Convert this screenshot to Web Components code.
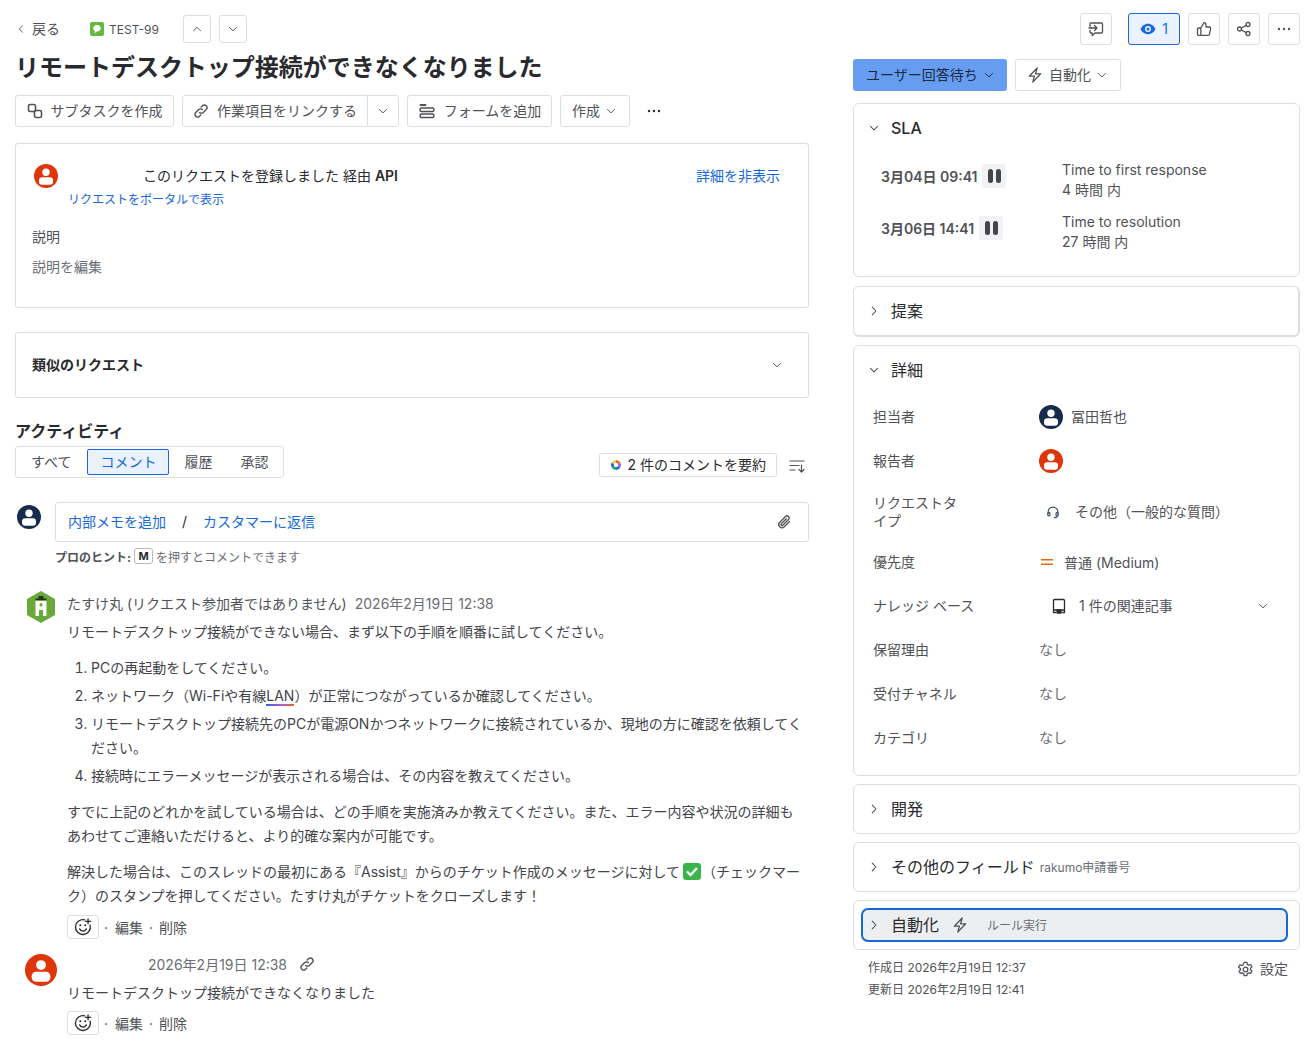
<!DOCTYPE html>
<html lang="ja">
<head>
<meta charset="utf-8">
<title>TEST-99</title>
<style>
    html, body { margin: 0; padding: 0; background: #fff; }
    body {
        font-family: Inter, "Noto Sans CJK JP", sans-serif;
        font-size: 14px;
        color: #292a2e;
    }
</style>
</head>
<body>
<issue-page></issue-page>

<script>
// stroke icons on a 16x16 box, filled ones carry their own attributes
const ICONS = {
    'chevron-down': '<path d="M4 6.2l4 4 4-4"/>',
    'chevron-up': '<path d="M4 10l4-4 4 4"/>',
    'chevron-left': '<path d="M10 3.5L5.8 8l4.2 4.5"/>',
    'chevron-right': '<path d="M6 3.5L10.2 8 6 12.5"/>',
    'subtask': '<rect x="1.5" y="1.5" width="7" height="7" rx="1.6"/><rect x="7.5" y="7.5" width="7" height="7" rx="1.6"/>',
    'link': '<path d="M6.6 9.4a2.6 2.6 0 0 0 3.7 0l2.9-2.9a2.6 2.6 0 0 0-3.7-3.7L8.2 4.1"/><path d="M9.4 6.6a2.6 2.6 0 0 0-3.7 0L2.8 9.5a2.6 2.6 0 0 0 3.7 3.7l1.3-1.3"/>',
    'form': '<path d="M1.5 2h5" stroke-width="1.800"/><rect x="1.200" y="5" width="13.600" height="3.600" rx="1"/><rect x="1.200" y="11" width="13.600" height="3.600" rx="1"/>',
    'more': '<circle cx="3" cy="8" r="1.2" fill="currentColor" stroke="none"/><circle cx="8" cy="8" r="1.2" fill="currentColor" stroke="none"/><circle cx="13" cy="8" r="1.2" fill="currentColor" stroke="none"/>',
    'feedback': '<path d="M3 2h10.5a1 1 0 0 1 1 1v8a1 1 0 0 1-1 1H7l-2.8 2.5V12H3a1 1 0 0 1-1-1V9.5"/><path d="M2 2v3.5M1 7h8M6.5 4.5L9 7l-2.500 2.500"/>',
    'eye': '<path fill="currentColor" stroke="none" fill-rule="evenodd" d="M8 2.800c3.400 0 6.200 2.300 7.500 5.200-1.300 2.900-4.100 5.200-7.500 5.200S1.800 10.900.5 8C1.800 5.100 4.600 2.800 8 2.800zm0 2.200a3 3 0 1 0 0 6 3 3 0 0 0 0-6zm0 1.500a1.500 1.500 0 1 1 0 3 1.500 1.500 0 0 1 0-3z"/>',
    'like': '<path d="M4.800 7v7.300H2.500a1 1 0 0 1-1-1V8a1 1 0 0 1 1-1h2.300zm0 0L8 1.700c1.300 0 2 .9 2 2V6h3.300c.9 0 1.500.8 1.300 1.700l-1.100 5.400c-.1.700-.7 1.200-1.400 1.200H4.800"/>',
    'share': '<circle cx="3.500" cy="8" r="2"/><circle cx="12" cy="3.500" r="2"/><circle cx="12" cy="12.500" r="2"/><path d="M5.300 7l4.900-2.600M5.300 9l4.900 2.600"/>',
    'bolt': '<path d="M10.200 .9L2.300 9.200h5.100L5.800 15.100l7.900-8.300H8.600z"/>',
    'clip': '<path d="M13.500 7.500L8 13a3.200 3.200 0 0 1-4.500-4.500l6-6a2.100 2.100 0 0 1 3 3l-5.700 5.700a1 1 0 0 1-1.500-1.500l5-5"/>',
    'sort': '<path d="M1 3h14M1 7.500h9M1 12h5M12.500 7v7M10 11.500l2.500 2.500 2.500-2.500"/>',
    'emoji': '<path d="M9.600 1.700A6.600 6.600 0 1 0 14.300 6.400"/><path d="M5 9.700c.7 1.300 1.800 2 3 2s2.300-.7 3-2"/><path d="M12.500 .8v4.400M10.300 3h4.400"/><circle cx="5.600" cy="6.400" r=".9" fill="currentColor" stroke="none"/><circle cx="10" cy="6.400" r=".9" fill="currentColor" stroke="none"/>',
    'headset': '<path d="M2.500 10V7.800a5.500 5.500 0 0 1 11 0V10"/><rect x="2" y="8.500" width="2.500" height="4" rx="1.100"/><rect x="11.500" y="8.500" width="2.500" height="4" rx="1.100"/><path d="M12.700 12.500c0 1.300-1.300 2-3.200 2"/>',
    'book': '<path d="M13.500 12V2.500a1 1 0 0 0-1-1h-9a1 1 0 0 0-1 1V12zM2.500 12v2.500h2M13.500 12v2.500h-2"/><rect x="6" y="12" width="4" height="3" fill="currentColor"/>',
    'gear': '<circle cx="8" cy="8" r="2.200"/><path d="M6.700 1.300h2.600l.4 1.900 1.200.7 1.900-.6 1.300 2.200-1.400 1.300v1.400l1.400 1.300-1.300 2.200-1.900-.6-1.200.7-.4 1.900H6.700l-.4-1.900-1.200-.7-1.900.6-1.300-2.200 1.400-1.300V7.200L1.400 5.900l1.300-2.200 1.900.6 1.200-.7z"/>',
};

class UiIcon extends HTMLElement {
    connectedCallback() {
        const size = this.getAttribute('size') || 16;
        const width = this.getAttribute('stroke') || 1.4;
        const name = this.getAttribute('name');
        this.attachShadow({ mode: 'open' }).innerHTML = `
            <style>
                :host { display: inline-flex; flex: none; width: ${size}px; height: ${size}px; }
                svg { display: block; width: 100%; height: 100%; fill: none; stroke: currentColor; stroke-width: ${width}; stroke-linecap: round; stroke-linejoin: round; }
            </style>
            <svg viewBox="0 0 16 16">${ICONS[name] || ''}</svg>
        `;
    }
}
customElements.define('ui-icon', UiIcon);

class UserAvatar extends HTMLElement {
    connectedCallback() {
        const size = this.getAttribute('size') || 24;
        const color = this.getAttribute('color') || '#de350b';
        this.attachShadow({ mode: 'open' }).innerHTML = `
            <style>
                :host { display: block; flex: none; width: ${size}px; height: ${size}px; }
                svg { display: block; width: 100%; height: 100%; }
            </style>
            <svg viewBox="0 0 24 24">
                <defs><clipPath id="c"><circle cx="12" cy="12" r="12"/></clipPath></defs>
                <circle cx="12" cy="12" r="12" fill="${color}"/>
                <circle cx="12" cy="8.300" r="3.700" fill="#fff"/>
                <rect x="5" y="13.300" width="14" height="7.500" rx="3.200" fill="#fff" clip-path="url(#c)"/>
            </svg>
        `;
    }
}
customElements.define('user-avatar', UserAvatar);

// text in the CJK font sits a pixel low, so the padding lifts it and icons are pushed back
class UiButton extends HTMLElement {
    constructor() {
        super();
        this.attachShadow({ mode: 'open' }).innerHTML = `
            <style>
                :host {
                    display: inline-flex;
                    align-items: center;
                    justify-content: center;
                    box-sizing: border-box;
                    height: 32px;
                    gap: 8px;
                    padding: 0 0 2px;
                    border: 1px solid #dcdee2;
                    border-radius: 3px;
                    background: #fff;
                    color: #505258;
                    font-size: 14px;
                    white-space: nowrap;
                }
                ::slotted(ui-icon) { margin-top: 2px; }
                :host([selected]) { background: #e9f2fe; border-color: #1868db; color: #1868db; }
                :host([square]) { width: 32px; padding: 0; }
                :host([square]) ::slotted(ui-icon) { margin-top: 0; }
                :host([small]) { width: 28px; height: 28px; padding: 0; }
                :host([small]) ::slotted(ui-icon) { margin-top: 0; }
            </style>
            <slot></slot>
        `;
    }
}
customElements.define('ui-button', UiButton);

class SidePanel extends HTMLElement {
    connectedCallback() {
        const open = this.hasAttribute('open');
        const latin = this.hasAttribute('latin');
        this.attachShadow({ mode: 'open' }).innerHTML = `
            <style>
                :host {
                    display: block;
                    box-sizing: border-box;
                    border: 1px solid #dcdee2;
                    border-radius: 6px;
                    background: #fff;
                }
                .head {
                    display: flex;
                    align-items: center;
                    gap: 10px;
                    box-sizing: border-box;
                    height: 48px;
                    padding: 0 0 ${latin ? 0 : 2}px 13px;
                    font-size: 16px;
                    font-weight: ${latin ? 500 : 400};
                    color: #292a2e;
                }
                ui-icon { margin-top: ${latin ? 0 : 2}px; color: #505258; }
            </style>
            <div class="head">
                <ui-icon name="${open ? 'chevron-down' : 'chevron-right'}" size="14" stroke="1.200"></ui-icon>
                <span>${this.getAttribute('heading')}</span>
                <slot name="extra"></slot>
            </div>
            <slot></slot>
        `;
    }
}
customElements.define('side-panel', SidePanel);

class DetailField extends HTMLElement {
    connectedCallback() {
        this.attachShadow({ mode: 'open' }).innerHTML = `
            <style>
                :host { display: grid; grid-template-columns: 166px 1fr; align-items: center; min-height: 24px; font-size: 14px; }
                :host([tall]) { min-height: 37px; }
                .label { width: 90px; line-height: 18px; color: #505258; }
                :host([nowrap]) .label { white-space: nowrap; }
                .value { display: flex; align-items: center; color: #505258; }
            </style>
            <div class="label">${this.getAttribute('label')}</div>
            <div class="value"><slot></slot></div>
        `;
    }
}
customElements.define('detail-field', DetailField);

class SlaRow extends HTMLElement {
    connectedCallback() {
        this.attachShadow({ mode: 'open' }).innerHTML = `
            <style>
                :host { display: grid; grid-template-columns: 181px 1fr; height: 40px; }
                .when { display: flex; align-items: center; gap: 5px; height: 24px; margin-top: 4px; font-weight: 600; color: #505258; white-space: nowrap; }
                .pause { display: flex; align-items: center; justify-content: center; gap: 3px; width: 24px; height: 24px; border-radius: 3px; background: #f1f2f4; }
                .pause i { display: block; width: 5px; height: 14px; border-radius: 2.500px; background: #44464c; }
                .what { line-height: 20px; color: #505258; }
            </style>
            <div class="when">${this.getAttribute('when')}<span class="pause"><i></i><i></i></span></div>
            <div class="what">${this.getAttribute('title')}<br>${this.getAttribute('left')}</div>
        `;
    }
}
customElements.define('sla-row', SlaRow);

class CommentActions extends HTMLElement {
    constructor() {
        super();
        this.attachShadow({ mode: 'open' }).innerHTML = `
            <style>
                :host { display: flex; align-items: center; height: 24px; color: #505258; font-size: 14px; white-space: nowrap; }
                .react { display: flex; align-items: center; justify-content: center; box-sizing: border-box; width: 32px; height: 24px; margin-right: 5px; border: 1px solid #dcdee2; border-radius: 3px; color: #292a2e; }
                .dot { width: 4px; text-align: center; }
                .a { margin-right: 6px; }
                .b { margin-right: 7px; }
            </style>
            <span class="react"><ui-icon name="emoji" size="18" stroke="1.200"></ui-icon></span>
            <span class="dot b">·</span><span class="a">編集</span><span class="dot a">·</span><span>削除</span>
        `;
    }
}
customElements.define('comment-actions', CommentActions);

class IssueMain extends HTMLElement {
    constructor() {
        super();
        this.attachShadow({ mode: 'open' }).innerHTML = `
            <style>
                :host { display: block; width: 794px; padding-top: 15px; }
                .crumbs { display: flex; align-items: center; height: 28px; color: #505258; font-size: 12px; }
                .back { display: flex; align-items: center; gap: 5px; font-size: 14px; width: 75px; padding-bottom: 2px; }
                .back ui-icon { margin-top: 2px; }
                .key { display: flex; align-items: center; gap: 5px; width: 93px; }
                .key svg { width: 14px; height: 14px; }
                .crumbs ui-button + ui-button { margin-left: 8px; }
                h1 { margin: 10px 0 0; font-size: 24px; line-height: 30px; font-weight: 700; color: #292a2e; white-space: nowrap; letter-spacing: -0.02px; }
                .tools { display: flex; align-items: center; gap: 8px; margin-top: 12px; }
                .split { display: flex; }
                .split ui-button:first-child { width: 186px; border-radius: 3px 0 0 3px; }
                .split ui-button:last-child { border-radius: 0 3px 3px 0; margin-left: -1px; width: 32px; }
                .dots { margin-left: 8px; color: #292a2e; }
                .card { box-sizing: border-box; border: 1px solid #dcdee2; border-radius: 3px; }
                .request { height: 165px; margin-top: 16px; padding: 20px 28px 0 18px; }
                .who { display: flex; align-items: center; height: 24px; }
                .who span { margin-left: 85px; padding-bottom: 2px; }
                .who b { font-weight: 600; }
                .who a { margin-left: auto; padding-bottom: 2px; color: #1868db; }
                .portal { margin: 3px 0 0 34px; font-size: 12px; line-height: 18px; color: #1868db; }
                .desc { margin: 18px 0 0 -2px; line-height: 20px; color: #505258; }
                .edit { margin: 10px 0 0 -2px; line-height: 20px; color: #6b6e76; }
                .similar { display: flex; align-items: center; justify-content: space-between; height: 66px; margin-top: 24px; padding: 0 24px 2px 16px; font-weight: 700; }
                .similar ui-icon { margin-top: 2px; color: #505258; }
                h2 { margin: 22px 0 0; font-size: 16px; line-height: 22px; font-weight: 700; color: #292a2e; }
                .activity { display: flex; align-items: flex-end; margin-top: 4px; }
                .tabs { display: flex; align-items: center; box-sizing: border-box; height: 32px; width: 269px; padding-left: 15px; border: 1px solid #dcdee2; border-radius: 3px; color: #505258; }
                .tabs span { flex: none; padding-bottom: 3px; }
                .tabs .on { display: flex; align-items: center; justify-content: center; box-sizing: border-box; width: 82px; height: 26px; margin: 0 15px 0 16px; border: 1px solid #1868db; border-radius: 2px; background: #e9f2fe; color: #1868db; }
                .tabs .gap { margin-left: 28px; }
                .sum { display: flex; align-items: center; gap: 6px; box-sizing: border-box; height: 24px; margin: 0 0 1px auto; padding: 0 10px 3px; border: 1px solid #dcdee2; border-radius: 3px; color: #292a2e; white-space: nowrap; }
                .sum svg { margin-top: 3px; }
                .sort { margin: 0 4px 4px 12px; color: #505258; }
                .reply { display: flex; align-items: flex-start; gap: 14px; margin-top: 24px; padding-left: 2px; }
                .box { display: flex; align-items: center; box-sizing: border-box; width: 754px; height: 40px; padding: 0 16px 2px 12px; border: 1px solid #dcdee2; border-radius: 3px; color: #1868db; }
                .box em { font-style: normal; color: #292a2e; margin: 0 16px; }
                .box ui-icon { margin: 2px 0 0 auto; color: #505258; }
                .reply user-avatar { margin-top: 3px; }
                .hint { display: flex; align-items: center; height: 16px; margin: 6px 0 0 40px; font-size: 12px; color: #6b6e76; white-space: nowrap; }
                .hint b { color: #505258; font-weight: 700; }
                .hint kbd { display: inline-flex; align-items: center; justify-content: center; box-sizing: border-box; width: 19px; height: 16px; margin: 0 3px; border: 1px solid #b7b9be; border-radius: 3px; font: 700 11px Inter, sans-serif; color: #292a2e; }
                .comment { display: grid; grid-template-columns: 52px 735px; }
                .first { margin-top: 27px; }
                .hex { margin: 0 0 0 12px; width: 28px; height: 32px; }
                .meta { display: flex; gap: 8px; align-items: center; height: 24px; color: #505258; white-space: nowrap; }
                .meta .at { color: #6b6e76; }
                .text { line-height: 24px; color: #42444a; }
                .text p { margin: 5px 0 0; }
                ol { margin: 12px 0 0; padding: 0 0 0 24px; }
                li { margin-bottom: 4px; }
                .lan { display: inline-block; line-height: 20px; border-bottom: 2px solid; border-image: linear-gradient(90deg, #1868db, #af59e1, #e56910) 1; height: 20px; box-sizing: border-box; }
                .check { display: inline-block; vertical-align: -3px; width: 18px; height: 17px; margin: 0 1px 0 3px; }
                .text .p2 { margin-top: 12px; }
                comment-actions { margin-top: 7px; }
                .second { margin: 15px 0 0 10px; grid-template-columns: 42px 735px; }
                .second .meta { margin-top: -2px; padding-left: 81px; }
                .second .text { margin-top: 5px; }
                .second .meta ui-icon { margin-left: 4px; color: #505258; }
                .second comment-actions { margin-top: 6px; }
            </style>
            <div class="crumbs">
                <span class="back"><ui-icon name="chevron-left" size="12" stroke="1.200"></ui-icon>戻る</span>
                <span class="key">
                    <svg viewBox="0 0 14 14"><rect width="14" height="14" rx="2" fill="#63ba3c"/><path d="M7 3c2.200 0 3.800 1.400 3.800 3.200S9.200 9.400 7 9.400l-2.400 1.800.3-2.300C3.900 8.300 3.200 7.300 3.200 6.200 3.200 4.400 4.800 3 7 3z" fill="#fff"/></svg>
                    TEST-99
                </span>
                <ui-button small><ui-icon name="chevron-up" size="14" stroke="1.100"></ui-icon></ui-button>
                <ui-button small><ui-icon name="chevron-down" size="14" stroke="1.100"></ui-icon></ui-button>
            </div>
            <h1>リモートデスクトップ接続ができなくなりました</h1>
            <div class="tools">
                <ui-button style="width:159px"><ui-icon name="subtask" stroke="1.600"></ui-icon>サブタスクを作成</ui-button>
                <div class="split">
                    <ui-button><ui-icon name="link"></ui-icon>作業項目をリンクする</ui-button>
                    <ui-button><ui-icon name="chevron-down" size="14" stroke="1.100"></ui-icon></ui-button>
                </div>
                <ui-button style="width:145px;gap:9px;padding-left:1px"><ui-icon name="form" stroke="1.500"></ui-icon>フォームを追加</ui-button>
                <ui-button style="width:70px;gap:4px">作成<ui-icon name="chevron-down" size="14" stroke="1.100"></ui-icon></ui-button>
                <ui-icon class="dots" name="more"></ui-icon>
            </div>
            <div class="card request">
                <div class="who">
                    <user-avatar color="#de350b"></user-avatar>
                    <span>このリクエストを登録しました 経由 <b>API</b></span>
                    <a>詳細を非表示</a>
                </div>
                <div class="portal">リクエストをポータルで表示</div>
                <div class="desc">説明</div>
                <div class="edit">説明を編集</div>
            </div>
            <div class="card similar">類似のリクエスト<ui-icon name="chevron-down" size="14" stroke="1.100"></ui-icon></div>
            <h2>アクティビティ</h2>
            <div class="activity">
                <div class="tabs">
                    <span>すべて</span><span class="on">コメント</span><span>履歴</span><span class="gap">承認</span>
                </div>
                <div class="sum">
                    <svg width="12" height="12" viewBox="0 0 12 12"><path d="M6 1a5 5 0 0 1 4.300 2.500L8 5a2.300 2.300 0 0 0-2-1.200z" fill="#e56910"/><path d="M10.300 3.500a5 5 0 0 1 0 5L8 7a2.300 2.300 0 0 0 0-2z" fill="#af59e1"/><path d="M10.300 8.500A5 5 0 0 1 6 11V8.200A2.300 2.300 0 0 0 8 7z" fill="#1868db"/><path d="M6 11a5 5 0 0 1-4.300-2.500L4 7a2.300 2.300 0 0 0 2 1.200z" fill="#22a06b"/><path d="M1.700 8.500a5 5 0 0 1 0-5L4 5a2.300 2.300 0 0 0 0 2z" fill="#1868db"/><path d="M1.700 3.500A5 5 0 0 1 6 1v2.800A2.300 2.300 0 0 0 4 5z" fill="#f5cd47"/></svg>
                    2 件のコメントを要約
                </div>
                <ui-icon class="sort" name="sort" stroke="1.200"></ui-icon>
            </div>
            <div class="reply">
                <user-avatar color="#172b4d"></user-avatar>
                <div class="box">内部メモを追加<em>/</em>カスタマーに返信<ui-icon name="clip" stroke="1.300"></ui-icon></div>
            </div>
            <div class="hint"><b>プロのヒント:</b><kbd>M</kbd>を押すとコメントできます</div>
            <div class="comment first">
                <svg class="hex" viewBox="0 0 28 32">
                    <path d="M14 0l14 8v16l-14 8-14-8V8z" fill="#6aa83a"/>
                    <path d="M11.500 5h5v2.500h3V9h-11V7.500h3z" fill="#26331a"/>
                    <path d="M8.500 10h11v15h-3.500v-6h-4v6H8.500z" fill="#fff"/>
                    <rect x="12.500" y="12" width="3" height="3.500" rx="1.500" fill="#6aa83a"/>
                </svg>
                <div class="body">
                    <div class="meta"><span>たすけ丸 (リクエスト参加者ではありません)</span><span class="at">2026年2月19日 12:38</span></div>
                    <div class="text">
                        <p>リモートデスクトップ接続ができない場合、まず以下の手順を順番に試してください。</p>
                        <ol>
                            <li>PCの再起動をしてください。</li>
                            <li>ネットワーク（Wi-Fiや有線<span class="lan">LAN</span>）が正常につながっているか確認してください。</li>
                            <li>リモートデスクトップ接続先のPCが電源ONかつネットワークに接続されているか、現地の方に確認を依頼してください。</li>
                            <li>接続時にエラーメッセージが表示される場合は、その内容を教えてください。</li>
                        </ol>
                        <p class="p2">すでに上記のどれかを試している場合は、どの手順を実施済みか教えてください。また、エラー内容や状況の詳細もあわせてご連絡いただけると、より的確な案内が可能です。</p>
                        <p class="p2">解決した場合は、このスレッドの最初にある『Assist』からのチケット作成のメッセージに対して<svg class="check" viewBox="0 0 18 17"><rect width="18" height="17" rx="3" fill="#3bb54a"/><path d="M4 8.500l3.500 3.500L14 5" fill="none" stroke="#fff" stroke-width="2.400"/></svg>（チェックマー<br>ク）のスタンプを押してください。たすけ丸がチケットをクローズします！</p>
                    </div>
                    <comment-actions></comment-actions>
                </div>
            </div>
            <div class="comment second">
                <user-avatar color="#de350b" size="32"></user-avatar>
                <div class="body">
                    <div class="meta"><span class="at">2026年2月19日 12:38</span><ui-icon name="link"></ui-icon></div>
                    <div class="text">リモートデスクトップ接続ができなくなりました</div>
                    <comment-actions></comment-actions>
                </div>
            </div>
        `;
    }
}
customElements.define('issue-main', IssueMain);

class IssueSide extends HTMLElement {
    constructor() {
        super();
        this.attachShadow({ mode: 'open' }).innerHTML = `
            <style>
                :host { display: block; width: 447px; padding-top: 13px; }
                .actions { display: flex; justify-content: flex-end; gap: 8px; }
                .actions .watch { width: 52px; gap: 6px; margin-left: 8px; }
                .status { display: flex; gap: 8px; margin-top: 14px; }
                .status .wait { width: 154px; gap: 4px; justify-content: flex-start; padding-left: 13px; background: #669df1; border: none; color: #1c2b42; }
                .status .auto { width: 106px; gap: 6px; }
                .status .auto ui-icon:last-child { margin-left: -2px; }
                .panels { display: flex; flex-direction: column; margin-top: 12px; }
                side-panel { flex: none; }
                .sla { height: 174px; }
                .sla .rows { display: flex; flex-direction: column; gap: 12px; padding: 8px 0 0 27px; }
                .tip { height: 51px; margin-top: 9px; border-width: 1px 2px 2px 1px; }
                .more { height: 431px; margin-top: 8px; }
                .fields { display: flex; flex-direction: column; gap: 20px; padding: 11px 19px 0 19px; }
                .dev, .other, .auto-rules { height: 50px; margin-top: 8px; }
                .auto-rules { box-sizing: border-box; border: 1px solid #dcdee2; border-radius: 6px; }
                .extra { font-size: 12px; color: #6b6e76; margin-left: -5px; }
                .up { padding-bottom: 2px; }
                .none { padding-bottom: 2px; color: #6b6e76; }
                .rule { display: flex; align-items: center; box-sizing: border-box; height: 34px; margin: 7px 11px 0 7px; padding: 0 0 2px 4px; gap: 10px; border: 2px solid #1868db; border-radius: 7px; background: #eceef0; font-size: 16px; }
                .rule .bolt { margin-left: 3px; }
                .rule .note { font-size: 12px; color: #6b6e76; margin-left: 9px; }
                .rule ui-icon { margin-top: 2px; color: #505258; }
                .foot { display: flex; justify-content: space-between; padding: 0 12px 0 15px; margin-top: 7px; font-size: 12px; line-height: 22px; color: #505258; }
                .config { display: flex; align-items: flex-start; gap: 6px; font-size: 14px; padding-top: 1px; }
                .config ui-icon { margin-top: 3px; }
                .ft { white-space: nowrap; }
            </style>
            <div class="actions">
                <ui-button square><ui-icon name="feedback" stroke="1.300"></ui-icon></ui-button>
                <ui-button selected class="watch"><ui-icon name="eye"></ui-icon>1</ui-button>
                <ui-button square><ui-icon name="like" stroke="1.300"></ui-icon></ui-button>
                <ui-button square><ui-icon name="share" stroke="1.300"></ui-icon></ui-button>
                <ui-button square><ui-icon name="more" size="16"></ui-icon></ui-button>
            </div>
            <div class="status">
                <ui-button class="wait">ユーザー回答待ち<ui-icon name="chevron-down" size="14" stroke="1.100"></ui-icon></ui-button>
                <ui-button class="auto"><ui-icon name="bolt" stroke="1.300"></ui-icon>自動化<ui-icon name="chevron-down" size="14" stroke="1.100"></ui-icon></ui-button>
            </div>
            <div class="panels">
                <side-panel class="sla" heading="SLA" open latin>
                    <div class="rows">
                        <sla-row when="3月04日 09:41" title="Time to first response" left="4 時間 内"></sla-row>
                        <sla-row when="3月06日 14:41" title="Time to resolution" left="27 時間 内"></sla-row>
                    </div>
                </side-panel>
                <side-panel class="tip" heading="提案"></side-panel>
                <side-panel class="more" heading="詳細" open>
                    <div class="fields">
                        <detail-field label="担当者"><user-avatar color="#172b4d"></user-avatar><span class="up" style="margin-left:8px">冨田哲也</span></detail-field>
                        <detail-field label="報告者"><user-avatar color="#de350b"></user-avatar></detail-field>
                        <detail-field label="リクエストタイプ" tall><ui-icon name="headset" size="14" stroke="1.400" style="margin:0 15px 0 7px;color:#44546f"></ui-icon><span class="up">その他（一般的な質問）</span></detail-field>
                        <detail-field label="優先度"><svg width="12" height="6" viewBox="0 0 12 6" style="margin:0 11px 0 2px"><path d="M0 .8h12M0 5.200h12" stroke="#e56910" stroke-width="1.500"/></svg>普通 (Medium)</detail-field>
                        <detail-field label="ナレッジ ベース" nowrap><ui-icon name="book" stroke="1.300" style="margin:0 12px;color:#292a2e"></ui-icon><span class="up">1 件の関連記事</span><ui-icon name="chevron-down" size="14" stroke="1.100" style="margin:0 10px 0 auto"></ui-icon></detail-field>
                        <detail-field label="保留理由"><span class="none">なし</span></detail-field>
                        <detail-field label="受付チャネル"><span class="none">なし</span></detail-field>
                        <detail-field label="カテゴリ"><span class="none">なし</span></detail-field>
                    </div>
                </side-panel>
                <side-panel class="dev" heading="開発"></side-panel>
                <side-panel class="other" heading="その他のフィールド"><span slot="extra" class="extra">rakumo申請番号</span></side-panel>
                <div class="auto-rules">
                    <div class="rule">
                        <ui-icon name="chevron-right" size="14" stroke="1.200"></ui-icon>
                        <span>自動化</span>
                        <ui-icon class="bolt" name="bolt" stroke="1.300"></ui-icon>
                        <span class="note">ルール実行</span>
                    </div>
                </div>
            </div>
            <div class="foot">
                <div class="ft">作成日 2026年2月19日 12:37<br>更新日 2026年2月19日 12:41</div>
                <div class="config"><ui-icon name="gear" size="17" stroke="1.200"></ui-icon>設定</div>
            </div>
        `;
    }
}
customElements.define('issue-side', IssueSide);

class IssuePage extends HTMLElement {
    constructor() {
        super();
        this.attachShadow({ mode: 'open' }).innerHTML = `
            <style>
                :host { display: flex; gap: 44px; padding-left: 15px; }
            </style>
            <issue-main></issue-main>
            <issue-side></issue-side>
        `;
    }
}
customElements.define('issue-page', IssuePage);
</script>
</body>
</html>
